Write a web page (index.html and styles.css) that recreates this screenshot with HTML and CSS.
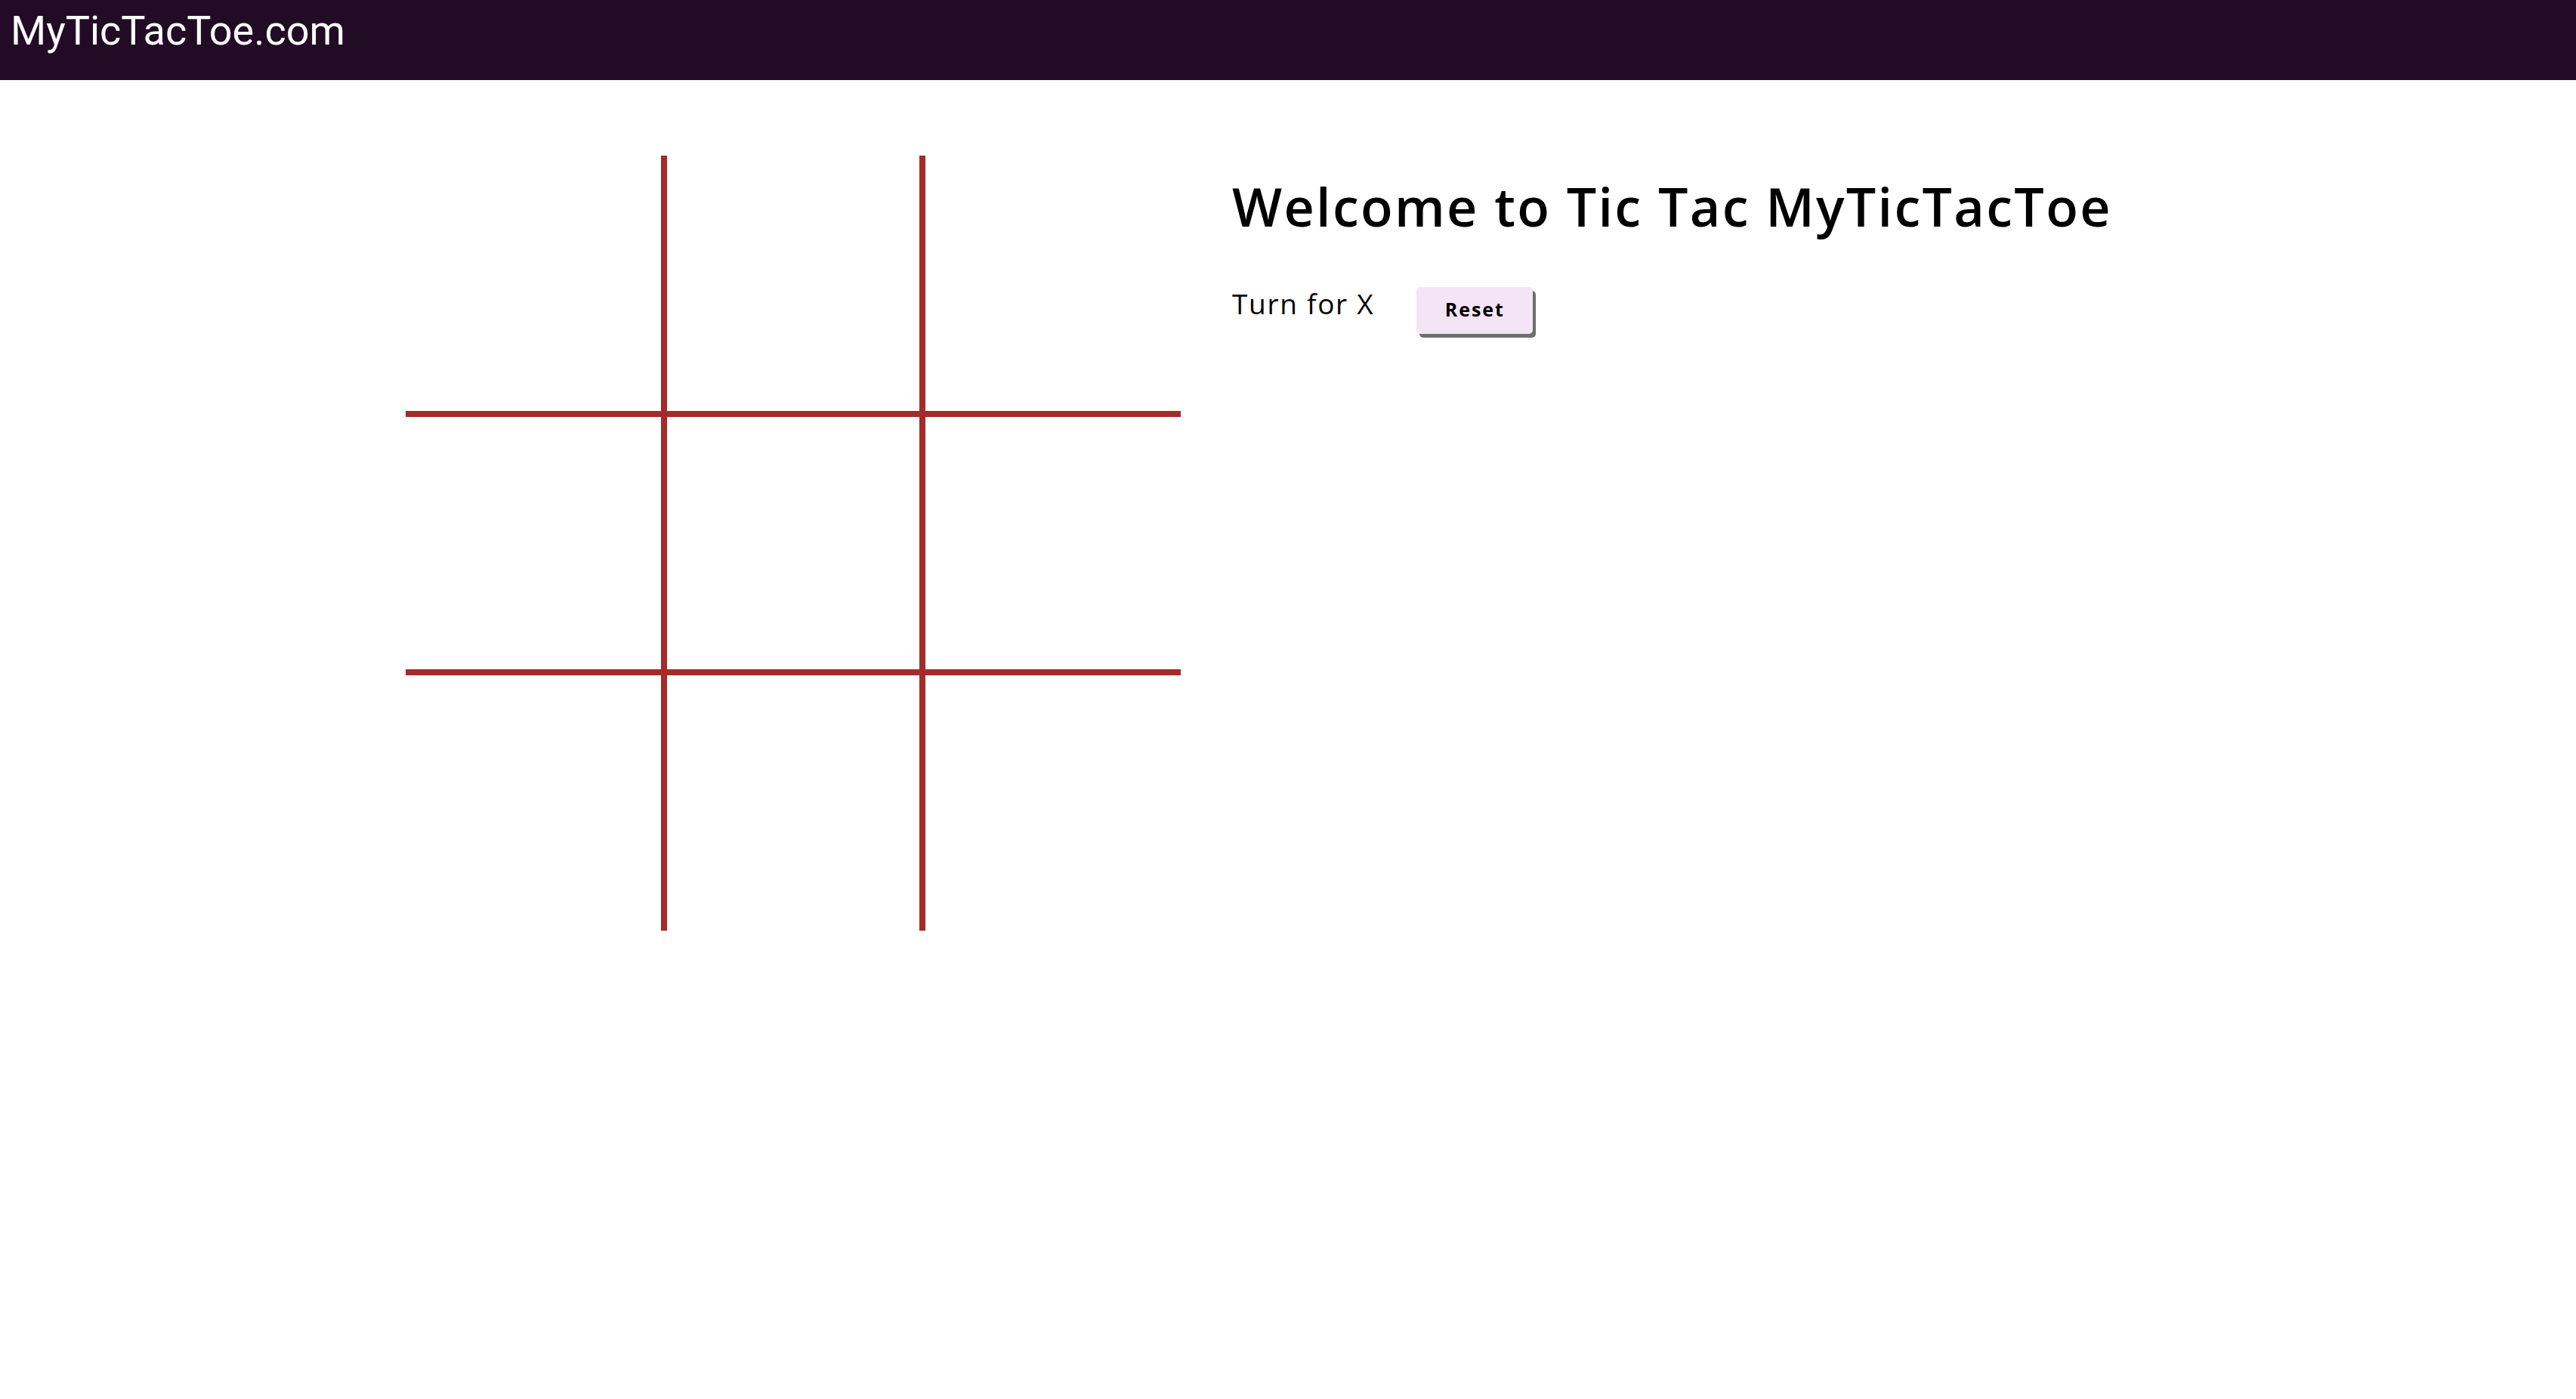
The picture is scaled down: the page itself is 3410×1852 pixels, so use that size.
FILE: index.html
```html
<!DOCTYPE html>
<html lang="en">
<head>
<meta charset="utf-8">
<title>MyTicTacToe.com</title>
<link rel="stylesheet" href="styles.css">
</head>
<body>
<header class="topbar">
  <div class="brand">MyTicTacToe.com</div>
</header>
<main class="page">
  <div class="board">
    <div class="cell c1 r1"></div>
    <div class="cell c2 r1"></div>
    <div class="cell c3 r1"></div>
    <div class="cell c1 r2"></div>
    <div class="cell c2 r2"></div>
    <div class="cell c3 r2"></div>
    <div class="cell c1 r3"></div>
    <div class="cell c2 r3"></div>
    <div class="cell c3 r3"></div>
  </div>
  <section class="info">
    <h1 class="title">Welcome to Tic Tac MyTicTacToe</h1>
    <div class="status-row">
      <span class="turn">Turn for X</span>
      <button class="reset" type="button">Reset</button>
    </div>
  </section>
</main>
</body>
</html>
```

FILE: styles.css
```css
* { box-sizing: border-box; }

html, body {
  margin: 0;
  padding: 0;
  background: #ffffff;
}

body {
  font-family: "Open Sans", "Liberation Sans", sans-serif;
  color: #000;
}

.topbar {
  height: 106px;
  background: #220b25;
  padding: 9px 0 0 14px;
}

.brand {
  font-family: Roboto, "Liberation Sans", sans-serif;
  font-size: 54px;
  line-height: 1.172;
  color: #ffffff;
}

.page {
  display: flex;
  align-items: flex-start;
  padding: 100px 0 0 537px;
  gap: 68px;
}

.board {
  display: grid;
  grid-template-columns: repeat(3, 342px);
  grid-template-rows: repeat(3, 342px);
  flex: none;
}

.cell {
  border: 0 solid #a52a2a;
}
.c1 { border-right-width: 4px; }
.c2 { border-left-width: 4px; border-right-width: 4px; }
.c3 { border-left-width: 4px; }
.r1 { border-bottom-width: 4px; }
.r2 { border-top-width: 4px; border-bottom-width: 4px; }
.r3 { border-top-width: 4px; }

.info {
  flex: 1;
  padding-top: 25px;
}

.title {
  margin: 0;
  font-size: 70px;
  font-weight: 600;
  line-height: 1.2;
  letter-spacing: 2.3px;
}

.status-row {
  display: flex;
  align-items: flex-start;
  gap: 56px;
  margin-top: 65px;
}

.turn {
  font-size: 37px;
  line-height: 1.2;
  letter-spacing: 1.7px;
}

.reset {
  width: 154px;
  height: 62px;
  border: none;
  border-radius: 5px;
  background: #f3e5f5;
  box-shadow: 4px 5px 0 #6e6e6e;
  font-family: "Open Sans", "Liberation Sans", sans-serif;
  font-size: 25px;
  font-weight: 700;
  letter-spacing: 2px;
  color: #000;
  padding: 0 0 4px 0;
  cursor: pointer;
}
```
